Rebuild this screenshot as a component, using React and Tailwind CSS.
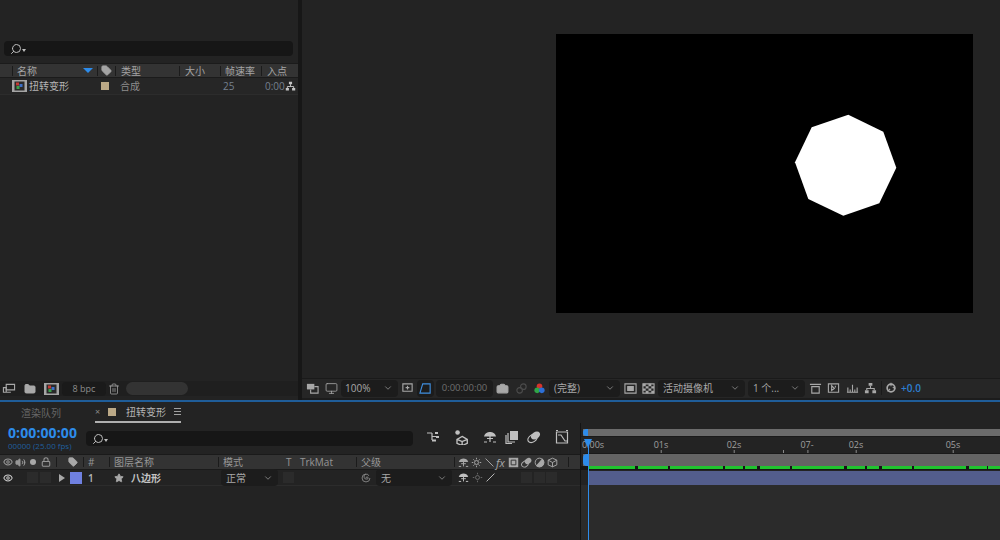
import { ChevronDown, Eye, Folder, Lock, Search, Star, Tag, Trash2, Camera, Monitor, Volume2 } from 'lucide-react'

const GREEN = [47, 30, 53, 18, 12, 30, 52, 18, 12, 30, 52, 18, 12]
const GREEN_GAP = [3, 2, 2, 2, 3, 2, 3, 2, 3, 2, 3, 1, 0]

const TICKS = [
  { label: '01s', x: 80 },
  { label: '02s', x: 153 },
  { label: '07-', x: 226 },
  { label: '02s', x: 275 },
  { label: '05s', x: 372 },
]
const MINOR = [202]

// small drawn icons, 14px box unless told otherwise
function Ico({ className = 'h-[13px] w-[13px]', children, sw = 1.2 }) {
  return (
    <svg viewBox="0 0 14 14" className={`shrink-0 ${className}`} fill="none" stroke="currentColor" strokeWidth={sw}>
      {children}
    </svg>
  )
}

function SearchBox({ className }) {
  return (
    <div className={`flex items-center rounded-sm bg-[#161616] pl-[6px] text-[#bdbdbd] ${className}`}>
      <Search className="h-[12px] w-[12px] -scale-x-100" strokeWidth={2} />
      <div className="mt-[3px] h-0 w-0 border-x-[2.5px] border-t-[3px] border-x-transparent border-t-[#bdbdbd]" />
    </div>
  )
}

function Net({ className }) {
  return (
    <Ico className={className}>
      <path d="M5 1h4v3H5zM1 9h4v3H1zM9 9h4v3H9z" fill="currentColor" stroke="none" />
      <path d="M7 4v3M3 9V7h8v2" />
    </Ico>
  )
}

function Solo({ className }) {
  return (
    <Ico className={className}>
      <path d="M1 6.500C2 3 4.500 2 7 2s5 1 6 4.500z" fill="currentColor" stroke="none" />
      <path d="M7 6v6M4 8.500h6M1 12h3M10 12h3" />
    </Ico>
  )
}

function CompThumb({ className }) {
  return (
    <svg viewBox="0 0 15 12" className={`shrink-0 ${className}`}>
      <rect width="15" height="12" fill="#a5a5a5" />
      <rect x="2.500" y="1.500" width="10" height="9" fill="#2a2a2a" />
      <rect x="4" y="2.500" width="3" height="3" fill="#c23a34" />
      <rect x="7.500" y="4" width="3" height="3" fill="#3b6fc7" />
      <rect x="4.500" y="6" width="3" height="3" fill="#3aa04a" />
    </svg>
  )
}

function Dropdown({ className, text = '' }) {
  return (
    <div className={`flex h-[17px] items-center justify-between rounded-sm bg-[#1c1c1c] pl-[5px] pr-[5px] text-[10px] text-[#a8a8a8] ${className}`}>
      <span className="leading-none">{text}</span>
      <ChevronDown className="h-[10px] w-[10px] text-[#8d8d8d]" />
    </div>
  )
}

function Sep({ className = '' }) {
  return <div className={`h-[10px] w-px shrink-0 bg-[#1b1b1b] ${className}`} />
}

function ProjectPanel() {
  return (
    <div className="flex w-[298px] shrink-0 flex-col pt-[41px]">
      <SearchBox className="ml-[4px] h-[15px] w-[289px]" />
      <div className="mt-[7px] flex h-[15px] items-center border-y border-[#1b1b1b] bg-[#333333] pl-[12px] text-[10px] text-[#a4a4a4]">
        <Sep />
        <span className="ml-[4px] w-[66px] leading-none">名称</span>
        <div className="h-0 w-0 border-x-[5px] border-t-[5px] border-x-transparent border-t-[#2d8ceb]" />
        <Sep className="ml-[4px]" />
        <Tag className="ml-[3px] h-[11px] w-[11px] fill-[#a4a4a4] text-[#a4a4a4]" />
        <Sep className="ml-[3px]" />
        <span className="ml-[5px] w-[58px] leading-none">类型</span>
        <Sep />
        <span className="ml-[5px] w-[35px] leading-none">大小</span>
        <Sep />
        <span className="ml-[4px] w-[36px] leading-none">帧速率</span>
        <Sep />
        <span className="ml-[5px] leading-none">入点</span>
      </div>
      <div className="flex h-[17px] items-center border-b border-[#2c2c2c] bg-[#262626] pl-[12px] text-[10px] text-[#8d8d8d]">
        <CompThumb className="h-[12px] w-[15px]" />
        <span className="ml-[2px] w-[72px] leading-none text-[#b5b5b5]">扭转变形</span>
        <div className="h-[8px] w-[8px] bg-[#bba987]" />
        <span className="ml-[11px] w-[103px] leading-none">合成</span>
        <span className="w-[42px] leading-none text-[#75808f]">25</span>
        <span className="leading-none text-[#75808f]">0:00</span>
        <Net className="h-[11px] w-[11px] text-[#c4c4c4]" />
      </div>
      <div className="flex-1" />
      <div className="mb-[4px] flex h-[15px] items-center bg-[#1f1f1f] pl-[2px] text-[#a8a8a8]">
        <Ico className="h-[13px] w-[14px]">
          <path d="M4 2.500h9v6H4z" />
          <path d="M1 6h3v5H1zM4 11h5" />
        </Ico>
        <Folder className="ml-[8px] h-[12px] w-[12px] fill-[#a8a8a8]" />
        <CompThumb className="ml-[8px] h-[12px] w-[15px]" />
        <div className="ml-[3px] flex h-[14px] w-[44px] items-center justify-center rounded-sm bg-[#1a1a1a] text-[9px] leading-none text-[#8d8d8d]">
          8 bpc
        </div>
        <Trash2 className="ml-[2px] h-[12px] w-[12px]" strokeWidth={1.5} />
        <div className="ml-[6px] h-[13px] w-[62px] rounded-full bg-[#333333]" />
      </div>
    </div>
  )
}

function ViewerBar() {
  return (
    <div className="flex h-[20px] items-center border-t border-[#1a1a1a] bg-[#262626] pb-px pl-[4px] text-[#a8a8a8]">
      <Ico className="h-[13px] w-[13px]">
        <path d="M1 2h8v6H1z" fill="currentColor" stroke="none" />
        <path d="M5 8v4h8V5H9" />
      </Ico>
      <Monitor className="ml-[6px] h-[13px] w-[13px]" strokeWidth={1.5} />
      <Dropdown className="ml-[3px] w-[57px] !pl-[4px]" text="100%" />
      <Ico className="ml-[3px] h-[13px] w-[13px]">
        <path d="M2 2h10v8H2zM7 4v4M5 6h4" />
      </Ico>
      <div className="ml-[3px] flex h-[17px] w-[17px] items-center justify-center rounded-sm bg-[#1c1c1c] text-[#3f8fe0]">
        <Ico className="h-[13px] w-[13px]">
          <path d="M4 2h8v10H1z" />
        </Ico>
      </div>
      <div className="ml-[2px] flex h-[17px] w-[57px] items-center justify-center rounded-sm bg-[#1c1c1c] text-[9.5px] leading-none text-[#6f6f6f]">
        0:00:00:00
      </div>
      <Camera className="ml-[3px] h-[13px] w-[13px] fill-[#a8a8a8] text-[#a8a8a8]" />
      <Ico className="ml-[6px] h-[13px] w-[13px] text-[#4c4c4c]">
        <circle cx="5" cy="9" r="3" />
        <circle cx="9" cy="5" r="3" />
      </Ico>
      <svg viewBox="0 0 14 14" className="ml-[5px] h-[13px] w-[13px] shrink-0">
        <circle cx="7" cy="4.500" r="3" fill="#d6332c" />
        <circle cx="4.500" cy="9" r="3" fill="#2fa648" />
        <circle cx="9.500" cy="9" r="3" fill="#2d6fd6" />
      </svg>
      <Dropdown className="ml-[3px] w-[71px]" text="(完整)" />
      <Ico className="ml-[4px] h-[13px] w-[13px]">
        <path d="M1 2h12v10H1z" />
        <path d="M4 5h6v4H4z" fill="currentColor" />
      </Ico>
      <Ico className="ml-[5px] h-[13px] w-[13px]">
        <path d="M1 2h12v10H1z" />
        <path d="M1 2h3v2.500H1zM7 2h3v2.500H7zM4 4.500h3V7H4zM10 4.500h3V7h-3zM1 7h3v2.500H1zM7 7h3v2.500H7zM4 9.500h3V12H4zM10 9.500h3V12h-3z" fill="currentColor" stroke="none" />
      </Ico>
      <Dropdown className="ml-[3px] w-[87px]" text="活动摄像机" />
      <Dropdown className="ml-[3px] w-[57px]" text="1 个..." />
      <Ico className="ml-[4px] h-[13px] w-[13px]">
        <path d="M1 2.500h12M3 5h8v7H3z" />
      </Ico>
      <Ico className="ml-[5px] h-[13px] w-[13px]">
        <path d="M1.500 2h11v9h-11zM5 4l3 3-3 2zM9 4v2" />
      </Ico>
      <Ico className="ml-[6px] h-[13px] w-[13px]">
        <path d="M1 11h12M2 6v5M7 3v8M12 6v5M4.500 8v3M9.500 8v3" />
      </Ico>
      <Net className="ml-[5px] h-[13px] w-[13px]" />
      <div className="ml-[4px] h-[14px] w-px bg-[#1a1a1a]" />
      <Ico className="ml-[3px] h-[12px] w-[12px]" sw={2}>
        <circle cx="7" cy="7" r="4.500" />
        <path d="M7 1v4M12 8 9 6M3 11l3-3" strokeWidth={1.200} />
      </Ico>
      <span className="ml-[4px] text-[10px] font-semibold leading-none text-[#2d7fd1]">+0.0</span>
    </div>
  )
}

function TimelineLeft() {
  return (
    <div className="flex w-[581px] shrink-0 flex-col border-r border-[#141414]">
      <div className="flex h-[31px] items-start">
        <div className="ml-[8px] w-[78px] pt-[2px]">
          <div className="text-[14px] font-bold leading-[16px] tracking-[0.1px] text-[#2d8ceb]">0:00:00:00</div>
          <div className="text-[8px] leading-[9px] text-[#205f9e]">00000 (25.00 fps)</div>
        </div>
        <SearchBox className="mt-[8px] h-[15px] w-[327px]" />
        <div className="ml-[13px] mt-[6px] flex items-center text-[#c0c0c0]">
          <Ico className="h-[14px] w-[14px]">
            <path d="M1 3h5M6 3v7M6 6.500h4" />
            <path d="M9 2h3v2H9zM10 6h3v2h-3zM6 9.500h4v2H6z" fill="currentColor" stroke="none" />
          </Ico>
          <Ico className="ml-[13px] h-[16px] w-[16px]">
            <path d="M8 6.500 12.500 9v3.500L8 14.500 3.500 12.500V9zM3.500 9 8 11l4.500-2M8 11v3.500" />
            <circle cx="4" cy="3" r="2" fill="currentColor" stroke="none" />
          </Ico>
          <Solo className="ml-[14px] h-[14px] w-[14px]" />
          <Ico className="ml-[8px] h-[14px] w-[14px]">
            <path d="M5 1h8v9H5z" fill="currentColor" stroke="none" />
            <path d="M3 3v9h7M1 5v8.500h6" />
          </Ico>
          <Ico className="ml-[8px] h-[14px] w-[14px]">
            <ellipse cx="8.500" cy="5.500" rx="5" ry="3.500" fill="currentColor" stroke="none" transform="rotate(-35 8.500 5.500)" />
            <ellipse cx="5.500" cy="8.500" rx="5" ry="3.500" transform="rotate(-35 5.500 8.500)" />
          </Ico>
          <Ico className="ml-[14px] h-[14px] w-[14px]">
            <path d="M1.500 2h11v11h-11zM3 5h3l4 6h3M1 .5h2M11 .5h2" />
          </Ico>
        </div>
      </div>
      <div className="flex h-[16px] items-center border-y border-[#1a1a1a] bg-[#333333] pl-[3px] text-[10px] text-[#969696]">
        <Eye className="h-[10px] w-[10px]" strokeWidth={2.5} />
        <Volume2 className="ml-[2px] h-[11px] w-[11px] fill-[#969696]" strokeWidth={2} />
        <div className="ml-[4px] h-[6px] w-[6px] rounded-full bg-[#a8a8a8]" />
        <Lock className="ml-[5px] h-[10px] w-[10px]" strokeWidth={2.5} />
        <Sep className="ml-[5px]" />
        <Tag className="ml-[11px] h-[10px] w-[10px] fill-[#a8a8a8] text-[#a8a8a8]" />
        <Sep className="ml-[5px]" />
        <span className="ml-[4px] w-[21px] leading-none">#</span>
        <Sep />
        <span className="ml-[4px] w-[104px] leading-none">图层名称</span>
        <Sep />
        <span className="ml-[4px] w-[63px] leading-none">模式</span>
        <span className="w-[14px] leading-none">T</span>
        <span className="w-[56px] leading-none">TrkMat</span>
        <Sep />
        <span className="ml-[4px] w-[93px] leading-none">父级</span>
        <Sep />
        <Solo className="ml-[3px] h-[11px] w-[11px] text-[#a8a8a8]" />
        <Ico className="ml-[2px] h-[11px] w-[11px] text-[#a8a8a8]">
          <circle cx="7" cy="7" r="2.500" />
          <path d="M7 1v2M7 11v2M1 7h2M11 7h2M3 3l1.500 1.500M9.500 9.500 11 11M3 11l1.500-1.500M9.500 4.500 11 3" />
        </Ico>
        <Ico className="ml-[2px] h-[11px] w-[11px] text-[#a8a8a8]">
          <path d="M2 2l10 10" />
        </Ico>
        <span className="ml-[1px] w-[12px] text-[11px] italic leading-none text-[#a8a8a8]">fx</span>
        <Ico className="h-[11px] w-[11px] text-[#a8a8a8]">
          <path d="M1 1h12v12H1z" fill="currentColor" stroke="none" />
          <path d="M4 4h6v6H4z" stroke="#333333" />
        </Ico>
        <Ico className="ml-[2px] h-[11px] w-[11px] text-[#a8a8a8]">
          <ellipse cx="9" cy="5" rx="4.500" ry="3.500" fill="currentColor" stroke="none" transform="rotate(-35 9 5)" />
          <ellipse cx="5" cy="9" rx="4.500" ry="3.500" transform="rotate(-35 5 9)" />
        </Ico>
        <Ico className="ml-[2px] h-[11px] w-[11px] text-[#a8a8a8]">
          <circle cx="7" cy="7" r="5.500" />
          <path d="M7 1.500a5.500 5.500 0 0 1 0 11z" fill="currentColor" transform="rotate(40 7 7)" />
        </Ico>
        <Ico className="ml-[2px] h-[11px] w-[11px] text-[#a8a8a8]">
          <path d="M7 1.500 12.500 4v6L7 12.500 1.500 10V4zM1.500 4 7 7l5.500-3M7 7v5.500" />
        </Ico>
        <Sep className="ml-[10px]" />
      </div>
      <div className="flex h-[16px] items-center border-b border-[#2c2c2c] pl-[3px] text-[10px] text-[#b8b8b8]">
        <Eye className="h-[10px] w-[10px] text-[#c8c8c8]" strokeWidth={2.5} />
        <div className="ml-[14px] h-[11px] w-[11px] bg-[#2b2b2b]" />
        <div className="ml-[2px] h-[11px] w-[11px] bg-[#2b2b2b]" />
        <div className="ml-[8px] h-0 w-0 border-y-[4px] border-l-[6px] border-y-transparent border-l-[#a8a8a8]" />
        <div className="ml-[5px] h-[12px] w-[12px] bg-[#6f80e0]" />
        <span className="ml-[6px] w-[26px] font-semibold leading-none">1</span>
        <Star className="h-[10px] w-[10px] fill-[#a8a8a8] text-[#a8a8a8]" />
        <span className="ml-[7px] w-[90px] font-semibold leading-none text-[#c4c4c4]">八边形</span>
        <Dropdown className="w-[57px]" text="正常" />
        <div className="ml-[5px] h-[11px] w-[11px] bg-[#2b2b2b]" />
        <Ico className="ml-[67px] h-[10px] w-[10px] text-[#8d8d8d]">
          <path d="M7 7a1.500 1.500 0 1 1 1.500 1.500A3.500 3.500 0 1 1 11 4M12.500 7A5.500 5.500 0 1 1 7 1.500" />
        </Ico>
        <Dropdown className="ml-[5px] w-[76px]" text="无" />
        <Solo className="ml-[6px] h-[11px] w-[11px] text-[#c0c0c0]" />
        <Ico className="ml-[3px] h-[11px] w-[11px] text-[#6a6a6a]">
          <circle cx="7" cy="7" r="2.500" />
          <path d="M7 1v2M7 11v2M1 7h2M11 7h2" />
        </Ico>
        <Ico className="ml-[2px] h-[11px] w-[11px] text-[#c0c0c0]">
          <path d="M2 12 12 2" />
        </Ico>
        <div className="ml-[25px] h-[11px] w-[11px] bg-[#2b2b2b]" />
        <div className="ml-[2px] h-[11px] w-[11px] bg-[#2b2b2b]" />
        <div className="ml-px h-[11px] w-[11px] bg-[#2b2b2b]" />
      </div>
    </div>
  )
}

function TimelineRight() {
  return (
    <div className="relative flex flex-1 flex-col overflow-hidden">
      <div className="ml-[2px] mt-[6px] flex h-[7px] items-center bg-[#6b6b6b]">
        <div className="h-[7px] w-[5px] rounded-l-full bg-[#2d8ceb]" />
      </div>
      <div className="relative h-[17px] border-t border-[#1a1a1a] text-[9px] leading-none text-[#a0a0a0]">
        <span className="absolute left-[1px] top-[3px]">0:00s</span>
        {TICKS.map((t) => (
          <span key={t.x} className="absolute top-[3px] -translate-x-1/2" style={{ left: t.x }}>
            {t.label}
            <span className="absolute left-1/2 top-[10px] h-[3px] w-px bg-[#8a8a8a]" />
          </span>
        ))}
        {MINOR.map((x) => (
          <span key={x} className="absolute top-[13px] h-[3px] w-px bg-[#8a8a8a]" style={{ left: x }} />
        ))}
      </div>
      <div className="ml-[2px] flex h-[13px] border-t border-[#1a1a1a] bg-[#646464]">
        <div className="h-[12px] w-[5px] rounded-l-sm bg-[#2d8ceb]" />
      </div>
      <div className="flex h-[4px] bg-[#151515] pl-[7px]">
        {GREEN.map((w, i) => (
          <div key={i} className="h-[3px] bg-[#1fc42e]" style={{ width: w, marginRight: GREEN_GAP[i] }} />
        ))}
      </div>
      <div className="ml-[7px] mt-px h-[14px] bg-[#535d8c]" />
      <div className="flex-1 bg-[#2b2b2b]" />

      {/* playhead */}
      <div className="absolute bottom-0 left-[7px] top-[21px] w-px bg-[#2d8ceb]" />
      <div className="absolute left-[3px] top-[16px] h-0 w-0 border-x-[4.500px] border-t-[9px] border-x-transparent border-t-[#2d8ceb]" />
    </div>
  )
}

export default function App() {
  return (
    <div className="flex h-[540px] w-[1000px] flex-col overflow-hidden bg-[#232323] font-['Open_Sans','Noto_Sans_CJK_SC',sans-serif]">
      <div className="flex h-[400px] shrink-0">
        <ProjectPanel />
        <div className="w-[4px] shrink-0 bg-[#171717]" />
        <div className="flex flex-1 flex-col">
          <div className="flex-1 pl-[254px] pt-[34px]">
            <div className="h-[279px] w-[417px] bg-black">
              <svg viewBox="0 0 417 279" className="h-full w-full">
                <polygon
                  points="292.300,80.700 327.300,97.700 340.300,133.700 323.300,169.300 287.300,181.700 252.300,165 239,128.300 255.700,93.300"
                  fill="#ffffff"
                />
              </svg>
            </div>
          </div>
          <ViewerBar />
          <div className="h-[2px] bg-[#1c1c1c]" />
        </div>
      </div>
      <div className="h-[2px] shrink-0 bg-[#1f5d99]" />
      <div className="flex h-[21px] shrink-0 items-center pl-[21px] text-[10px] leading-none text-[#8a8a8a]">
        <span className="w-[74px] text-[#666666]">渲染队列</span>
        <div className="flex h-[21px] w-[86px] items-center border-b-2 border-[#b0b0b0]">
          <span className="w-[13px] text-[9px] leading-none">×</span>
          <div className="h-[8px] w-[8px] bg-[#bba987]" />
          <span className="ml-[10px] w-[48px] text-[#b5b5b5]">扭转变形</span>
          <div className="flex w-[7px] flex-col gap-[2px]">
            <div className="h-px bg-[#a0a0a0]" />
            <div className="h-px bg-[#a0a0a0]" />
            <div className="h-px bg-[#a0a0a0]" />
          </div>
        </div>
      </div>
      <div className="flex flex-1">
        <TimelineLeft />
        <TimelineRight />
      </div>
    </div>
  )
}
